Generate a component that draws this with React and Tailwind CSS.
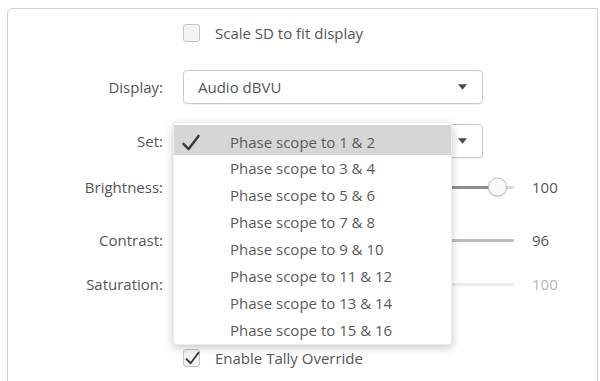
import { useState } from 'react';

// ── Small pieces ───────────────────────────────────────────────────
function CheckMark({ className }) {
  return (
    <svg viewBox="0 0 20 18" className={className} fill="none">
      <path d="M2 10.5 L7.5 16 L18 2" stroke="#3a3a3a" strokeWidth="2.6" strokeLinecap="round" strokeLinejoin="round" />
    </svg>
  );
}

function Checkbox({ checked, label }) {
  return (
    <div className="flex items-center h-[34px] pl-[175px]">
      <div className="relative w-[17px] h-[18px] rounded-[3px] border border-[#c4c4c4] bg-[#f4f4f4]">
        {checked && <CheckMark className="absolute left-[1px] top-[1px] w-[15px] h-[14px]" />}
      </div>
      <span className="ml-[15px] text-[15px] text-[#555]">{label}</span>
    </div>
  );
}

function Label({ children }) {
  return <div className="w-[156px] pr-[1px] text-right text-[15px] text-[#555]">{children}</div>;
}

function Arrow() {
  return (
    <svg viewBox="0 0 10 6" className="w-[9px] h-[6px]">
      <path d="M0 0 H10 L5 6 Z" fill="#4a4a4a" />
    </svg>
  );
}

function Select({ value }) {
  return (
    <div className="ml-[19px] w-[300px] h-[34px] flex items-center justify-between pl-[14px] pr-[15px] rounded-[4px] border border-[#cacaca] bg-white shadow-[0_1px_1px_rgba(0,0,0,0.06)]">
      <span className="text-[15px] text-[#555]">{value}</span>
      <Arrow />
    </div>
  );
}

function SliderRow({ label, value, track, fill, knob, valueColor }) {
  return (
    <div className="flex items-center h-[34px]">
      <Label>{label}</Label>
      <div className="ml-[19px] w-[331px] flex items-center">
        <div className="relative flex-1 h-[3px] rounded-full" style={{ background: track }}>
          {fill && <div className="absolute inset-y-0 left-0 right-[16px] rounded-full bg-[#8d8d8d]" />}
          {knob && (
            <div className="absolute right-[7px] top-1/2 -translate-y-1/2 w-[19px] h-[19px] rounded-full border border-[#bdbdbd] bg-[#fafafa] shadow-[0_1px_2px_rgba(0,0,0,0.12)]" />
          )}
        </div>
      </div>
      <span className="ml-[18px] text-[15px]" style={{ color: valueColor }}>{value}</span>
    </div>
  );
}

const options = [
  'Phase scope to 1 & 2',
  'Phase scope to 3 & 4',
  'Phase scope to 5 & 6',
  'Phase scope to 7 & 8',
  'Phase scope to 9 & 10',
  'Phase scope to 11 & 12',
  'Phase scope to 13 & 14',
  'Phase scope to 15 & 16',
];

// ── Popup menu ─────────────────────────────────────────────────────
function Menu({ selected }) {
  return (
    <div className="absolute left-[165px] top-[113px] w-[279px] pt-[2px] bg-white rounded-[3px] border border-[#ececec] shadow-[0_3px_8px_rgba(0,0,0,0.22)]">
      {options.map((o, i) => (
        <div
          key={o}
          className={
            i === 0
              ? 'flex items-center h-[30px] pt-[5px] bg-[#d6d6d6]'
              : 'flex items-center h-[27px]'
          }
        >
          <div className="w-[56px] pl-[7px]">
            {i === selected && <CheckMark className="w-[20px] h-[17px]" />}
          </div>
          <span className="text-[15px] text-[#5a5a5a]">{o}</span>
        </div>
      ))}
    </div>
  );
}

// ── Root export ────────────────────────────────────────────────────
export default function App() {
  const [sel] = useState(0);

  return (
    <div
      className="w-[600px] h-[381px] overflow-hidden bg-white pt-[8px] pl-[7px]"
      style={{ fontFamily: '"Open Sans", "Noto Sans", sans-serif' }}
    >
      <div className="relative w-[591px] h-[400px] rounded-tl-[6px] border border-[#cfcfcf] pt-[7px]">
        <Checkbox label="Scale SD to fit display" />

        <div className="flex items-center h-[34px] mt-[20px]">
          <Label>Display:</Label>
          <Select value="Audio dBVU" />
        </div>

        <div className="flex items-center h-[34px] mt-[20px]">
          <Label>Set:</Label>
          <Select value="" />
        </div>

        <div className="mt-[12px]">
          <SliderRow label="Brightness:" value="100" track="#d9d9d9" fill knob valueColor="#555" />
        </div>
        <div className="mt-[19px]">
          <SliderRow label="Contrast:" value="96" track="#bdbdbd" valueColor="#555" />
        </div>
        <div className="mt-[10px]">
          <SliderRow label="Saturation:" value="100" track="#ececec" valueColor="#b5b5b5" />
        </div>

        <div className="mt-[40px]">
          <Checkbox checked label="Enable Tally Override" />
        </div>

        <Menu selected={sel} />
      </div>
    </div>
  );
}
